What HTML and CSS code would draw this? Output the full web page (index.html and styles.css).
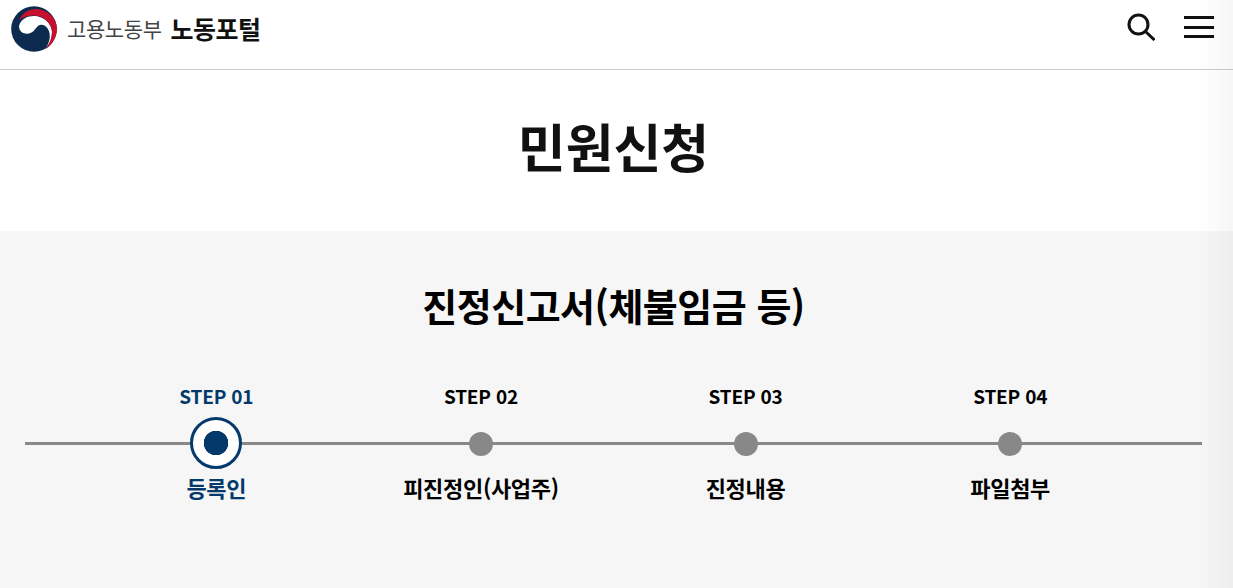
FILE: index.html
```html
<!DOCTYPE html>
<html lang="ko">
<head>
<meta charset="utf-8">
<title>민원신청</title>
<link rel="stylesheet" href="styles.css">
</head>
<body>
<div class="edge-shade"></div>
<header class="site-header">
  <a class="logo" href="#">
    <svg class="emblem" width="46" height="46" viewBox="0 0 46 46">
      <circle cx="23" cy="23" r="22.800" fill="#0d2a4f"/>
      <path d="M8 20C10 13 16 10 23 10C33 10 41 18 41 26C41 32 39 37 35 42C38 37 39.500 32 38.500 27C37 21 33 18 29 19C25 20 24 26 18 27.500C13 28.500 8 26 8 20Z" fill="#fff"/>
      <path d="M8 14C12 6 19 3 25 3C36 3 46 12 46 23C46 31 41 39 35 43C39 37 41 32 41 26C41 18 33 9.500 23 9.500C17 9.500 12 11 8 14Z" fill="#c8102e"/>
    </svg>
    <span class="logo-ministry">고용노동부</span>
    <strong class="logo-portal">노동포털</strong>
  </a>
  <div class="header-actions">
    <button class="icon-btn search-btn" aria-label="검색">
      <svg width="28" height="28" viewBox="0 0 28 28" fill="none" stroke="#111" stroke-width="3">
        <circle cx="11.500" cy="11.500" r="9.500"/>
        <path d="M18.500 18.500L27.500 27"/>
      </svg>
    </button>
    <button class="icon-btn menu-btn" aria-label="메뉴">
      <span></span><span></span><span></span>
    </button>
  </div>
</header>
<section class="page-title">
  <h1>민원신청</h1>
</section>
<main class="content">
  <h2>진정신고서(체불임금 등)</h2>
  <ol class="steps">
    <li class="step active">
      <span class="step-no">STEP 01</span>
      <span class="dot"></span>
      <span class="step-name">등록인</span>
    </li>
    <li class="step">
      <span class="step-no">STEP 02</span>
      <span class="dot"></span>
      <span class="step-name">피진정인(사업주)</span>
    </li>
    <li class="step">
      <span class="step-no">STEP 03</span>
      <span class="dot"></span>
      <span class="step-name">진정내용</span>
    </li>
    <li class="step">
      <span class="step-no">STEP 04</span>
      <span class="dot"></span>
      <span class="step-name">파일첨부</span>
    </li>
  </ol>
</main>
</body>
</html>
```
FILE: styles.css
```css
* { box-sizing: border-box; }
html, body { margin: 0; height: 100%; overflow: hidden; }
body {
  font-family: "Noto Sans CJK KR", "Noto Sans", sans-serif;
  color: #000;
  background: #fff;
  display: flex;
  flex-direction: column;
}
.edge-shade {
  position: fixed;
  top: 0;
  right: 0;
  bottom: 0;
  width: 36px;
  background: linear-gradient(to right, rgba(0,0,0,0), rgba(0,0,0,.03));
  pointer-events: none;
}
.site-header {
  height: 70px;
  flex: none;
  border-bottom: 1px solid #ccc;
  display: flex;
  align-items: center;
  justify-content: space-between;
  padding: 0 19px 12px 11px;
}
.logo {
  display: flex;
  align-items: center;
  text-decoration: none;
  color: #111;
}
.emblem { flex: none; margin-right: 10px; }
.logo-ministry {
  font-size: 21px;
  letter-spacing: -.4px;
  color: #444;
  margin-right: 9px;
  line-height: 1;
}
.logo-portal {
  font-size: 25px;
  font-weight: 700;
  letter-spacing: -.5px;
  line-height: 1;
}
.header-actions {
  display: flex;
  align-items: center;
  gap: 29px;
  padding-bottom: 3px;
}
.icon-btn {
  padding: 0;
  border: 0;
  background: none;
  display: block;
  height: 28px;
}
.menu-btn {
  width: 30px;
  height: 22px;
  display: flex;
  flex-direction: column;
  justify-content: space-between;
}
.menu-btn span { display: block; height: 3px; background: #111; }
.page-title {
  height: 161px;
  flex: none;
  display: flex;
  align-items: center;
  justify-content: center;
  padding: 0 6px 9px 0;
}
h1 {
  margin: 0;
  font-size: 52px;
  font-weight: 700;
  line-height: 1;
  color: #111;
}
.content {
  flex: 1;
  background: #f6f6f6;
  padding: 46px 31px 0 25px;
}
h2 {
  margin: 0 0 49px;
  font-size: 38px;
  line-height: 56px;
  font-weight: 700;
  text-align: center;
  letter-spacing: -.5px;
}
.steps {
  list-style: none;
  margin: 0;
  padding: 0 59.500px 0 59px;
  display: grid;
  grid-template-columns: repeat(4, 1fr);
  background: linear-gradient(#888, #888) no-repeat 0 60px / 100% 3px;
}
.step {
  display: flex;
  flex-direction: column;
  align-items: center;
}
.step-no {
  font-size: 19px;
  line-height: 28px;
  font-weight: 700;
  letter-spacing: -.2px;
}
.dot {
  width: 24px;
  height: 24px;
  margin: 22px 0 15px;
  border-radius: 50%;
  background: #888;
}
.step-name {
  font-size: 22px;
  line-height: 32px;
  font-weight: 700;
  letter-spacing: -.3px;
}
.step.active .step-no, .step.active .step-name { color: #033a6b; }
.step.active .dot {
  width: 52px;
  height: 52px;
  margin: 7px 0 2px;
  border: 3px solid #033a6b;
  background: radial-gradient(circle, #033a6b 0 12px, #fff 12.500px);
}
```
